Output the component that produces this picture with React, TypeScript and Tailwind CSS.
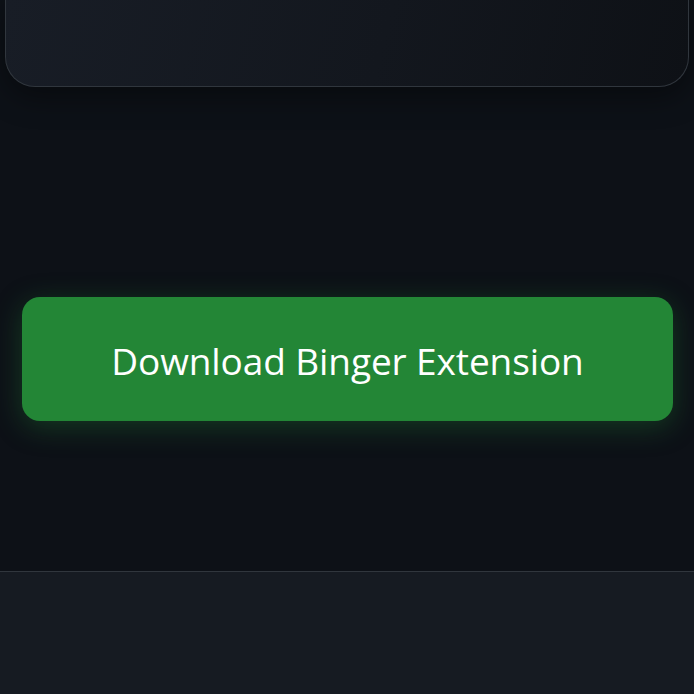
export default function App() {
  return (
    <div className="min-h-screen bg-[#0d1117] font-['Open_Sans','Noto_Sans',sans-serif] flex flex-col">
      {/* Card tail from previous section */}
      <div className="px-[5px]">
        <div className="h-[87px] rounded-b-[30px] border border-t-0 border-[#30363d] bg-[linear-gradient(105deg,#181d26_0%,#13171e_55%,#0e1116_100%)] shadow-[0_10px_30px_rgba(0,0,0,0.4)]" />
      </div>

      {/* Download call to action */}
      <section className="pt-[210px] pb-[150px] pl-[22px] pr-[21px]">
        <button className="w-full h-[124px] rounded-[18px] bg-[#238636] text-white text-[37px] pt-[4px] tracking-[-0.1px] shadow-[0_6px_28px_rgba(35,134,54,0.35)] flex items-center justify-center">
          Download Binger Extension
        </button>
      </section>

      {/* Footer */}
      <footer className="flex-1 min-h-[123px] border-t border-[#30363d] bg-[#161b22]" />
    </div>
  );
}
